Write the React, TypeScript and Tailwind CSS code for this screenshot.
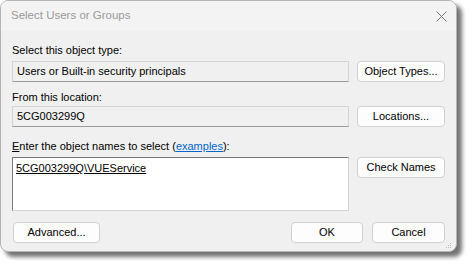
import React from 'react';

const font = { fontFamily: '"Liberation Sans", Arial, sans-serif' };

function Btn({ label, w, className = '' }: { label: React.ReactNode; w: string; className?: string }) {
  return (
    <button
      className={`${w} h-[21px] shrink-0 rounded-[4px] border border-[#d0d0d0] bg-[#fdfdfd] text-[11px] text-black leading-none flex items-center justify-center ${className}`}
    >
      {label}
    </button>
  );
}

export default function App() {
  return (
    <div className="w-[473px] h-[267px] bg-white" style={font}>
      <div className="w-[457px] h-[252px] rounded-[8px] border border-[#b4b4b4] bg-[#f0f0f0] flex flex-col overflow-hidden shadow-[5px_5px_4px_rgba(0,0,0,0.55)]">
        {/* Title bar */}
        <div className="h-[30px] shrink-0 bg-[#f3f3f3] flex items-center justify-between pl-[10px] pr-[9px]">
          <span className="text-[11.5px] text-[#9a9a9a]">Select Users or Groups</span>
          <svg width="11" height="11" viewBox="0 0 11 11" className="mt-[1px]">
            <path d="M0.5 0.5 L10.5 10.5 M10.5 0.5 L0.5 10.5" stroke="#7a7a7a" strokeWidth="1" />
          </svg>
        </div>

        {/* Body */}
        <div className="flex-1 flex flex-col pl-[11px] pr-[11px] text-[11px] text-black">
          <div className="h-[15px] mt-[12px] flex items-center">Select this object type:</div>
          <div className="mt-[3px] flex gap-[8px]">
            <div className="w-[337px] h-[21px] bg-[#f0f0f0] border border-[#d4d4d4] border-b-[#9a9a9a] flex items-center pl-[4px]">
              Users or Built-in security principals
            </div>
            <Btn label="Object Types..." w="w-[88px]" className="h-[20px]" />
          </div>

          <div className="h-[15px] mt-[8px] flex items-center">From this location:</div>
          <div className="mt-[1px] flex gap-[8px]">
            <div className="w-[337px] h-[21px] bg-[#f0f0f0] border border-[#d4d4d4] border-b-[#9a9a9a] flex items-center pl-[4px]">
              5CG003299Q
            </div>
            <Btn label="Locations..." w="w-[88px]" className="h-[20px]" />
          </div>

          <div className="h-[15px] mt-[12px] flex items-center">
            <span>
              <span className="underline">E</span>nter the object names to select (
              <span className="text-[#0066cc] underline">examples</span>):
            </span>
          </div>
          <div className="mt-[3px] flex gap-[8px] items-start">
            <div className="w-[337px] h-[54px] bg-white border border-[#7a7a7a] border-b-[#d4d4d4] border-r-[#d4d4d4] pl-[3px] pt-[2px]">
              <span className="underline">5CG003299Q\VUEService</span>
            </div>
            <Btn label="Check Names" w="w-[88px]" className="h-[20px]" />
          </div>

          <div className="mt-[11px] flex items-center">
            <Btn label="Advanced..." w="w-[87px]" className="ml-[1px]" />
            <div className="flex-1" />
            <Btn label="OK" w="w-[72px]" />
            <Btn label="Cancel" w="w-[73px]" className="ml-[9px]" />
          </div>
          <div className="flex justify-end mt-auto mb-[4px] mr-[-7px]">
            <svg width="7" height="7" viewBox="0 0 7 7">
              <rect x="5" y="0" width="1" height="1" fill="#b8b8b8" />
              <rect x="3" y="2" width="1" height="1" fill="#b8b8b8" />
              <rect x="5" y="2" width="1" height="1" fill="#b8b8b8" />
              <rect x="1" y="4" width="1" height="1" fill="#b8b8b8" />
              <rect x="3" y="4" width="1" height="1" fill="#b8b8b8" />
              <rect x="5" y="4" width="1" height="1" fill="#b8b8b8" />
            </svg>
          </div>
        </div>
      </div>
    </div>
  );
}
